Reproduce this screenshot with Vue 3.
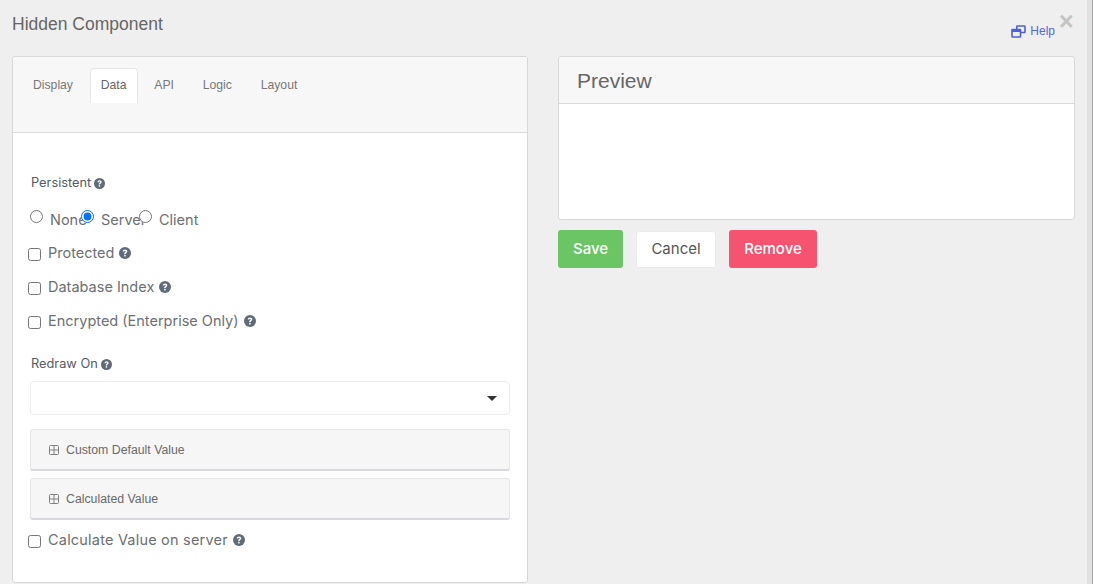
<script setup>
const tabs = [
  { name: 'Display', active: false },
  { name: 'Data', active: true },
  { name: 'API', active: false },
  { name: 'Logic', active: false },
  { name: 'Layout', active: false },
]
const radios = [
  { name: 'None', cls: 'r1', checked: false },
  { name: 'Server', cls: 'r2', checked: true },
  { name: 'Client', cls: 'r3', checked: false },
]
</script>

<template>
  <div class="page">
    <div class="modal">
      <header class="head">
        <h1>Hidden Component</h1>
        <div class="tools">
          <a class="help">
            <svg width="15" height="13" viewBox="0 0 15 13" fill="none" stroke="#4f5fd8" stroke-width="1.6">
              <rect x="5.8" y="1" width="8.2" height="6.5" rx="0.5" />
              <rect x="1" y="4.5" width="8.5" height="7.5" rx="0.5" fill="#efefef" />
              <path d="M1 6h8.5" stroke-width="2" />
            </svg>
            <span>Help</span>
          </a>
          <span class="close">×</span>
        </div>
      </header>
      <div class="cols">
        <section class="card left">
          <nav class="tabs">
            <span v-for="t in tabs" :key="t.name" class="tab" :class="{ active: t.active }">{{ t.name }}</span>
          </nav>
          <div class="form">
            <div class="label first">Persistent <svg class="q qs" viewBox="0 0 16 16"><use href="#qm" /></svg></div>
            <div class="radios">
              <label v-for="r in radios" :key="r.name" class="radio" :class="r.cls">
                <input type="radio" name="persist" :checked="r.checked" />
                <span>{{ r.name }}</span>
              </label>
            </div>
            <label class="check"><input type="checkbox" /><span>Protected</span><svg class="q" viewBox="0 0 16 16"><use href="#qm" /></svg></label>
            <label class="check"><input type="checkbox" /><span>Database Index</span><svg class="q" viewBox="0 0 16 16"><use href="#qm" /></svg></label>
            <label class="check"><input type="checkbox" /><span>Encrypted (Enterprise Only)</span><svg class="q" viewBox="0 0 16 16"><use href="#qm" /></svg></label>
            <div class="label redraw">Redraw On <svg class="q qs" viewBox="0 0 16 16"><use href="#qm" /></svg></div>
            <div class="select"><i class="caret"></i></div>
            <div class="panel first-panel"><svg class="plus" width="10" height="10" viewBox="0 0 10 10" fill="none" stroke="#808080" stroke-width="1"><rect x="0.5" y="0.5" width="9" height="9" rx="1" /><path d="M1 5h8M5 1v8" /></svg>Custom Default Value</div>
            <div class="panel"><svg class="plus" width="10" height="10" viewBox="0 0 10 10" fill="none" stroke="#808080" stroke-width="1"><rect x="0.5" y="0.5" width="9" height="9" rx="1" /><path d="M1 5h8M5 1v8" /></svg>Calculated Value</div>
            <label class="check last"><input type="checkbox" /><span>Calculate Value on server</span><svg class="q" viewBox="0 0 16 16"><use href="#qm" /></svg></label>
          </div>
        </section>
        <div class="right">
          <section class="card preview">
            <div class="preview-head">Preview</div>
            <div class="preview-body"></div>
          </section>
          <div class="buttons">
            <button class="btn save">Save</button>
            <button class="btn cancel">Cancel</button>
            <button class="btn remove">Remove</button>
          </div>
        </div>
      </div>
    </div>
    <div class="scrollbar"></div>
    <svg width="0" height="0" class="defs">
      <symbol id="qm" viewBox="0 0 16 16">
        <circle cx="8" cy="8" r="8" fill="#5f6b78" />
        <path d="M5 6.1C5.1 4.3 6.4 3.2 8.1 3.2c1.8 0 3 1.1 3 2.6 0 1.1-.6 1.7-1.4 2.2-.6.4-.8.7-.8 1.4H6.9c0-1.4.4-2 1.2-2.5.6-.4.9-.7.9-1.1 0-.5-.4-.8-1-.8-.6 0-1 .4-1.1 1z" fill="#fff" />
        <rect x="6.9" y="10.4" width="2" height="2.2" fill="#fff" />
      </symbol>
    </svg>
  </div>
</template>

<style scoped>
.page {
  width: 1093px;
  height: 584px;
  background: #efefef;
  display: flex;
  overflow: hidden;
  font-family: "Liberation Sans", Arial, sans-serif;
  color: #6c6f73;
}
.defs { position: absolute; }
.modal {
  flex: 1;
  padding: 0 12px;
  min-width: 0;
}
.scrollbar {
  width: 6px;
  background: #e0e0e0;
  border-right: 1px solid #a8a8a8;
  box-sizing: border-box;
}
.head {
  height: 56px;
  display: flex;
  justify-content: space-between;
}
h1 {
  margin: 14px 0 0;
  font-size: 17.5px;
  line-height: 21px;
  font-weight: 400;
  color: #666;
}
.tools {
  display: flex;
  align-items: flex-start;
  margin-right: 2px;
}
.help {
  display: flex;
  align-items: center;
  gap: 4px;
  margin-top: 24px;
  font-size: 12px;
  line-height: 14px;
  color: #5566dd;
}
.close {
  margin: 10px 0 0 4px;
  width: 14px;
  font-size: 25px;
  line-height: 22px;
  font-weight: 700;
  color: #c4c4c4;
  text-align: center;
}
.cols {
  display: flex;
  gap: 30px;
  align-items: flex-start;
}
.card {
  background: #fff;
  border: 1px solid #d8d8d8;
  border-radius: 3px;
  box-sizing: border-box;
}
.left {
  width: 516px;
  height: 527px;
}
.right {
  width: 517px;
}
.tabs {
  height: 76px;
  box-sizing: border-box;
  background: #f7f7f7;
  border-bottom: 1px solid #dcdcdc;
  border-radius: 3px 3px 0 0;
  padding: 11px 0 0 8px;
  display: flex;
  align-items: flex-start;
  gap: 4.8px;
}
.tab {
  height: 35px;
  padding: 0 12px;
  font-size: 12.2px;
  line-height: 34px;
  color: #777;
}
.tab.active {
  background: #fff;
  border: 1px solid #e6e6e6;
  border-bottom: 0;
  border-radius: 4px 4px 0 0;
  padding: 0 10px;
  line-height: 33px;
  box-sizing: border-box;
  color: #666;
}
.form {
  padding: 0 17px;
  font-family: Inter, "Liberation Sans", sans-serif;
}
.label {
  font-size: 12.8px;
  line-height: 18px;
  color: #555b62;
  display: flex;
  align-items: center;
  gap: 3px;
  padding-left: 1px;
}
.label.first { margin-top: 41px; }
.label.redraw { margin-top: 24px; }
.radios {
  display: flex;
  margin-top: 16px;
  height: 20px;
}
.radio {
  display: flex;
  font-size: 14.5px;
  line-height: 20px;
  color: #6c6f73;
  white-space: nowrap;
}
.radio input {
  width: 13px;
  height: 13px;
  margin: 2px 7px 0 0;
  flex: none;
  position: relative;
  z-index: 1;
}
.radio span { padding-top: 2px; }
.r1 { width: 51px; }
.r2 { width: 58px; }
.r3 { width: 70px; }
.check {
  display: flex;
  align-items: center;
  height: 20px;
  margin: 14px 0 0 -2px;
  font-size: 14.5px;
  line-height: 20px;
  color: #6c6f73;
  white-space: nowrap;
}
.radios + .check { margin-top: 15px; }
.check input {
  width: 13px;
  height: 13px;
  margin: 2px 7px 0 0;
  flex: none;
}
.q {
  width: 12px;
  height: 12px;
  margin-left: 5px;
}
.q.qs { width: 11px; height: 11px; margin-left: 0; }
.select {
  height: 34px;
  margin-top: 8px;
  background: #fff;
  border: 1px solid #ededed;
  border-radius: 4px;
  box-sizing: border-box;
  display: flex;
  align-items: center;
  justify-content: flex-end;
  padding-right: 12px;
}
.caret {
  width: 0;
  height: 0;
  border-left: 5.5px solid transparent;
  border-right: 5.5px solid transparent;
  border-top: 5px solid #333;
}
.panel {
  height: 42px;
  margin-top: 7px;
  background: #f6f6f6;
  border: 1px solid #e6e6e6;
  border-bottom: 2px solid #d8d8de;
  border-radius: 3px;
  box-sizing: border-box;
  display: flex;
  align-items: center;
  padding-left: 18px;
  font-family: "Liberation Sans", Arial, sans-serif;
  font-size: 12.3px;
  color: #6a6a6a;
}
.first-panel { margin-top: 14px; }
.plus { margin-right: 7px; }
.check.last { margin-top: 10px; letter-spacing: 0.2px; }
.preview { height: 164px; }
.preview-head {
  height: 46px;
  background: #f7f7f7;
  border-bottom: 1px solid #d8d8d8;
  border-radius: 3px 3px 0 0;
  padding-left: 18px;
  font-size: 21px;
  line-height: 48px;
  color: #666;
}
.buttons {
  display: flex;
  margin-top: 10px;
  gap: 13px;
}
.btn {
  height: 38px;
  border-radius: 3px;
  border: 0;
  padding: 0 0 2px;
  font-family: Inter, "Liberation Sans", sans-serif;
  font-size: 15px;
}
.save { width: 65px; background: #6cc565; color: #fff; font-weight: 500; }
.cancel { width: 80px; height: 37px; margin-top: 1px; background: #fff; border: 1px solid #eaeaf0; color: #555; }
.remove { width: 88px; background: #f5536f; color: #fff; font-weight: 500; }
</style>

<style>
html, body { margin: 0; overflow: hidden; }
</style>
